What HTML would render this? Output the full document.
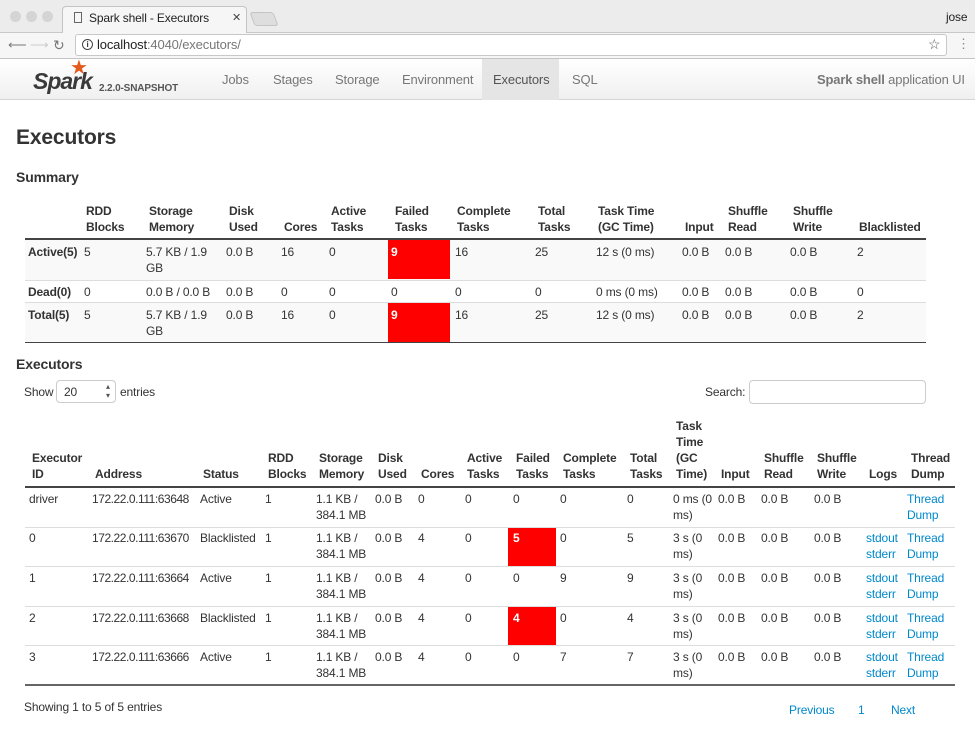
<!DOCTYPE html>
<html><head><meta charset="utf-8"><style>
*{margin:0;padding:0;box-sizing:border-box}
body{width:975px;height:729px;overflow:hidden;background:#fff;font-family:"Liberation Sans",Arial,sans-serif;font-size:12px;color:#333;position:relative;letter-spacing:-0.15px}
.a{position:absolute;line-height:16px;white-space:nowrap}
.b{font-weight:bold}
.l{color:#0088cc}
.red{position:absolute;background:#f00}
.w{color:#fff;font-weight:bold}
.hl{position:absolute;height:0}
.ad{letter-spacing:-0.45px}
</style></head><body>
<!-- browser chrome -->
<div style="position:absolute;left:0;top:0;width:975px;height:33px;background:#ececec;border-bottom:1px solid #c8c8c8"></div>
<div style="position:absolute;left:10px;top:11px;width:11px;height:11px;border-radius:50%;background:#d4d4d4"></div>
<div style="position:absolute;left:26px;top:11px;width:11px;height:11px;border-radius:50%;background:#d4d4d4"></div>
<div style="position:absolute;left:42px;top:11px;width:11px;height:11px;border-radius:50%;background:#d4d4d4"></div>
<div style="position:absolute;left:62px;top:6px;width:185px;height:28px;background:#f6f6f6;border:1px solid #c4c4c4;border-bottom:none;border-radius:4px 4px 0 0"></div>
<div style="position:absolute;left:252px;top:12px;width:24px;height:14px;background:#dedede;border:1px solid #c4c4c4;border-radius:3px;transform:skewX(20deg)"></div>
<div style="position:absolute;left:74px;top:12px;width:8px;height:11px;border:1px solid #666"></div>
<div class="a" style="left:89px;top:10px;font-size:12px;color:#222">Spark shell - Executors</div>
<div class="a" style="left:232px;top:10px;font-size:11px;color:#444">✕</div>
<div class="a" style="left:946px;top:9px;font-size:12px;color:#222">jose</div>
<div style="position:absolute;left:0;top:33px;width:975px;height:26px;background:#f6f6f6;border-bottom:1px solid #c4c4c4"></div>
<div class="a" style="left:8px;top:37px;font-size:13px;color:#777">⟵</div>
<div class="a" style="left:30px;top:37px;font-size:13px;color:#ccc">⟶</div>
<div class="a" style="left:53px;top:37px;font-size:14px;color:#777">↻</div>
<div style="position:absolute;left:75px;top:34px;width:872px;height:22px;background:#fff;border:1px solid #c8c8c8;border-radius:3px"></div>
<div style="position:absolute;left:82px;top:39px;width:11px;height:11px;border:1px solid #444;border-radius:50%;font-size:8px;line-height:9px;text-align:center;font-weight:bold">i</div>
<div class="a" style="left:97px;top:37px;font-size:13px;color:#222">localhost<span style="color:#777">:4040/executors/</span></div>
<div class="a" style="left:928px;top:36px;font-size:14px;color:#555">☆</div>
<div class="a" style="left:957px;top:36px;font-size:13px;color:#888">⋮</div>
<!-- navbar -->
<div style="position:absolute;left:0;top:59px;width:975px;height:41px;background:linear-gradient(#fff,#f0f0f0);border-bottom:1px solid #d4d4d4"></div>
<div class="a" style="left:33px;top:68px;font-size:23px;line-height:26px;font-style:italic;font-weight:bold;color:#3a3a3a;letter-spacing:-1px">Spark</div>
<div class="a" style="left:70px;top:58px;font-size:20px;line-height:20px;color:#e25a1c">★</div>
<div class="a" style="left:99px;top:81px;font-size:10px;font-weight:bold;color:#555">2.2.0-SNAPSHOT</div>
<div class="a" style="left:222px;top:72px;font-size:13px;color:#777">Jobs</div>
<div class="a" style="left:273px;top:72px;font-size:13px;color:#777">Stages</div>
<div class="a" style="left:335px;top:72px;font-size:13px;color:#777">Storage</div>
<div class="a" style="left:402px;top:72px;font-size:13px;color:#777">Environment</div>
<div style="position:absolute;left:482px;top:59px;width:77px;height:41px;background:#e5e5e5"></div>
<div class="a" style="left:493px;top:72px;font-size:13px;color:#555">Executors</div>
<div class="a" style="left:572px;top:72px;font-size:13px;color:#777">SQL</div>
<div class="a" style="left:817px;top:72px;font-size:13px;color:#777"><b>Spark shell</b> application UI</div>
<!-- headings -->
<div class="a b" style="left:16px;top:125px;font-size:21px;line-height:26px">Executors</div>
<div class="a b" style="left:16px;top:169px;font-size:14px">Summary</div>
<!-- summary table -->
<div style="position:absolute;left:25px;top:240px;width:901px;height:40px;background:#f9f9f9"></div>
<div style="position:absolute;left:25px;top:303px;width:901px;height:40px;background:#f9f9f9"></div>
<div class="hl" style="left:25px;top:238px;width:901px;border-top:2px solid #444"></div>
<div class="hl" style="left:25px;top:280px;width:901px;border-top:1px solid #ddd"></div>
<div class="hl" style="left:25px;top:302px;width:901px;border-top:1px solid #ddd"></div>
<div class="hl" style="left:25px;top:342px;width:901px;border-top:1px solid #444"></div>
<div class="red" style="left:388px;top:240px;width:62px;height:39px"></div>
<div class="red" style="left:388px;top:303px;width:62px;height:39px"></div>
<div class="a b" style="left:86px;top:203px">RDD<br>Blocks</div>
<div class="a b" style="left:149px;top:203px">Storage<br>Memory</div>
<div class="a b" style="left:229px;top:203px">Disk<br>Used</div>
<div class="a b" style="left:284px;top:219px">Cores</div>
<div class="a b" style="left:331px;top:203px">Active<br>Tasks</div>
<div class="a b" style="left:395px;top:203px">Failed<br>Tasks</div>
<div class="a b" style="left:457px;top:203px">Complete<br>Tasks</div>
<div class="a b" style="left:538px;top:203px">Total<br>Tasks</div>
<div class="a b" style="left:598px;top:203px">Task Time<br>(GC Time)</div>
<div class="a b" style="left:685px;top:219px">Input</div>
<div class="a b" style="left:728px;top:203px">Shuffle<br>Read</div>
<div class="a b" style="left:793px;top:203px">Shuffle<br>Write</div>
<div class="a b" style="left:859px;top:219px">Blacklisted</div>

<div class="a b" style="left:28px;top:244px">Active(5)</div><div class="a" style="left:84px;top:244px">5</div><div class="a" style="left:146px;top:244px">5.7 KB / 1.9<br>GB</div><div class="a" style="left:226px;top:244px">0.0 B</div><div class="a" style="left:281px;top:244px">16</div><div class="a" style="left:329px;top:244px">0</div><div class="a w" style="left:391px;top:244px">9</div><div class="a" style="left:455px;top:244px">16</div><div class="a" style="left:535px;top:244px">25</div><div class="a" style="left:596px;top:244px">12 s (0 ms)</div><div class="a" style="left:682px;top:244px">0.0 B</div><div class="a" style="left:725px;top:244px">0.0 B</div><div class="a" style="left:790px;top:244px">0.0 B</div><div class="a" style="left:857px;top:244px">2</div>

<div class="a b" style="left:28px;top:284px">Dead(0)</div><div class="a" style="left:84px;top:284px">0</div><div class="a" style="left:146px;top:284px">0.0 B / 0.0 B</div><div class="a" style="left:226px;top:284px">0.0 B</div><div class="a" style="left:281px;top:284px">0</div><div class="a" style="left:329px;top:284px">0</div><div class="a" style="left:391px;top:284px">0</div><div class="a" style="left:455px;top:284px">0</div><div class="a" style="left:535px;top:284px">0</div><div class="a" style="left:596px;top:284px">0 ms (0 ms)</div><div class="a" style="left:682px;top:284px">0.0 B</div><div class="a" style="left:725px;top:284px">0.0 B</div><div class="a" style="left:790px;top:284px">0.0 B</div><div class="a" style="left:857px;top:284px">0</div>

<div class="a b" style="left:28px;top:307px">Total(5)</div><div class="a" style="left:84px;top:307px">5</div><div class="a" style="left:146px;top:307px">5.7 KB / 1.9<br>GB</div><div class="a" style="left:226px;top:307px">0.0 B</div><div class="a" style="left:281px;top:307px">16</div><div class="a" style="left:329px;top:307px">0</div><div class="a w" style="left:391px;top:307px">9</div><div class="a" style="left:455px;top:307px">16</div><div class="a" style="left:535px;top:307px">25</div><div class="a" style="left:596px;top:307px">12 s (0 ms)</div><div class="a" style="left:682px;top:307px">0.0 B</div><div class="a" style="left:725px;top:307px">0.0 B</div><div class="a" style="left:790px;top:307px">0.0 B</div><div class="a" style="left:857px;top:307px">2</div>

<!-- executors -->
<div class="a b" style="left:16px;top:356px;font-size:14px">Executors</div>
<div class="a" style="left:24px;top:384px">Show</div>
<div style="position:absolute;left:56px;top:380px;width:60px;height:23px;border:1px solid #ccc;border-radius:4px;background:#fff"></div>
<div class="a" style="left:64px;top:384px">20</div>
<div class="a" style="left:106px;top:382px;font-size:8px;line-height:9px;color:#555">▴<br>▾</div>
<div class="a" style="left:120px;top:384px">entries</div>
<div class="a" style="left:705px;top:384px">Search:</div>
<div style="position:absolute;left:749px;top:380px;width:177px;height:24px;border:1px solid #ccc;border-radius:4px;background:#fff"></div>

<div class="hl" style="left:25px;top:486px;width:930px;border-top:2px solid #444"></div>
<div class="hl" style="left:25px;top:527px;width:930px;border-top:1px solid #ddd"></div>
<div class="hl" style="left:25px;top:566px;width:930px;border-top:1px solid #ddd"></div>
<div class="hl" style="left:25px;top:606px;width:930px;border-top:1px solid #ddd"></div>
<div class="hl" style="left:25px;top:645px;width:930px;border-top:1px solid #ddd"></div>
<div class="hl" style="left:25px;top:684px;width:930px;border-top:2px solid #666"></div>
<div class="red" style="left:508px;top:528px;width:48px;height:38px"></div>
<div class="red" style="left:508px;top:607px;width:48px;height:38px"></div>

<div class="a b" style="left:32px;top:450px">Executor<br>ID</div>
<div class="a b" style="left:95px;top:466px">Address</div>
<div class="a b" style="left:203px;top:466px">Status</div>
<div class="a b" style="left:268px;top:450px">RDD<br>Blocks</div>
<div class="a b" style="left:319px;top:450px">Storage<br>Memory</div>
<div class="a b" style="left:378px;top:450px">Disk<br>Used</div>
<div class="a b" style="left:421px;top:466px">Cores</div>
<div class="a b" style="left:467px;top:450px">Active<br>Tasks</div>
<div class="a b" style="left:516px;top:450px">Failed<br>Tasks</div>
<div class="a b" style="left:563px;top:450px">Complete<br>Tasks</div>
<div class="a b" style="left:630px;top:450px">Total<br>Tasks</div>
<div class="a b" style="left:676px;top:418px">Task<br>Time<br>(GC<br>Time)</div>
<div class="a b" style="left:721px;top:466px">Input</div>
<div class="a b" style="left:764px;top:450px">Shuffle<br>Read</div>
<div class="a b" style="left:817px;top:450px">Shuffle<br>Write</div>
<div class="a b" style="left:869px;top:466px">Logs</div>
<div class="a b" style="left:911px;top:450px">Thread<br>Dump</div>

<!-- rows -->
<div class="a" style="left:29px;top:491px">driver</div><div class="a ad" style="left:92px;top:491px">172.22.0.111:63648</div><div class="a" style="left:200px;top:491px">Active</div><div class="a" style="left:265px;top:491px">1</div><div class="a" style="left:316px;top:491px">1.1 KB /<br>384.1 MB</div><div class="a" style="left:375px;top:491px">0.0 B</div><div class="a" style="left:418px;top:491px">0</div><div class="a" style="left:465px;top:491px">0</div><div class="a" style="left:513px;top:491px">0</div><div class="a" style="left:560px;top:491px">0</div><div class="a" style="left:627px;top:491px">0</div><div class="a" style="left:673px;top:491px">0 ms (0<br>ms)</div><div class="a" style="left:718px;top:491px">0.0 B</div><div class="a" style="left:761px;top:491px">0.0 B</div><div class="a" style="left:814px;top:491px">0.0 B</div><div class="a l" style="left:907px;top:491px">Thread<br>Dump</div>

<div class="a" style="left:29px;top:530px">0</div><div class="a ad" style="left:92px;top:530px">172.22.0.111:63670</div><div class="a" style="left:200px;top:530px">Blacklisted</div><div class="a" style="left:265px;top:530px">1</div><div class="a" style="left:316px;top:530px">1.1 KB /<br>384.1 MB</div><div class="a" style="left:375px;top:530px">0.0 B</div><div class="a" style="left:418px;top:530px">4</div><div class="a" style="left:465px;top:530px">0</div><div class="a w" style="left:513px;top:530px">5</div><div class="a" style="left:560px;top:530px">0</div><div class="a" style="left:627px;top:530px">5</div><div class="a" style="left:673px;top:530px">3 s (0<br>ms)</div><div class="a" style="left:718px;top:530px">0.0 B</div><div class="a" style="left:761px;top:530px">0.0 B</div><div class="a" style="left:814px;top:530px">0.0 B</div><div class="a l" style="left:866px;top:530px">stdout<br>stderr</div><div class="a l" style="left:907px;top:530px">Thread<br>Dump</div>

<div class="a" style="left:29px;top:570px">1</div><div class="a ad" style="left:92px;top:570px">172.22.0.111:63664</div><div class="a" style="left:200px;top:570px">Active</div><div class="a" style="left:265px;top:570px">1</div><div class="a" style="left:316px;top:570px">1.1 KB /<br>384.1 MB</div><div class="a" style="left:375px;top:570px">0.0 B</div><div class="a" style="left:418px;top:570px">4</div><div class="a" style="left:465px;top:570px">0</div><div class="a" style="left:513px;top:570px">0</div><div class="a" style="left:560px;top:570px">9</div><div class="a" style="left:627px;top:570px">9</div><div class="a" style="left:673px;top:570px">3 s (0<br>ms)</div><div class="a" style="left:718px;top:570px">0.0 B</div><div class="a" style="left:761px;top:570px">0.0 B</div><div class="a" style="left:814px;top:570px">0.0 B</div><div class="a l" style="left:866px;top:570px">stdout<br>stderr</div><div class="a l" style="left:907px;top:570px">Thread<br>Dump</div>

<div class="a" style="left:29px;top:610px">2</div><div class="a ad" style="left:92px;top:610px">172.22.0.111:63668</div><div class="a" style="left:200px;top:610px">Blacklisted</div><div class="a" style="left:265px;top:610px">1</div><div class="a" style="left:316px;top:610px">1.1 KB /<br>384.1 MB</div><div class="a" style="left:375px;top:610px">0.0 B</div><div class="a" style="left:418px;top:610px">4</div><div class="a" style="left:465px;top:610px">0</div><div class="a w" style="left:513px;top:610px">4</div><div class="a" style="left:560px;top:610px">0</div><div class="a" style="left:627px;top:610px">4</div><div class="a" style="left:673px;top:610px">3 s (0<br>ms)</div><div class="a" style="left:718px;top:610px">0.0 B</div><div class="a" style="left:761px;top:610px">0.0 B</div><div class="a" style="left:814px;top:610px">0.0 B</div><div class="a l" style="left:866px;top:610px">stdout<br>stderr</div><div class="a l" style="left:907px;top:610px">Thread<br>Dump</div>

<div class="a" style="left:29px;top:649px">3</div><div class="a ad" style="left:92px;top:649px">172.22.0.111:63666</div><div class="a" style="left:200px;top:649px">Active</div><div class="a" style="left:265px;top:649px">1</div><div class="a" style="left:316px;top:649px">1.1 KB /<br>384.1 MB</div><div class="a" style="left:375px;top:649px">0.0 B</div><div class="a" style="left:418px;top:649px">4</div><div class="a" style="left:465px;top:649px">0</div><div class="a" style="left:513px;top:649px">0</div><div class="a" style="left:560px;top:649px">7</div><div class="a" style="left:627px;top:649px">7</div><div class="a" style="left:673px;top:649px">3 s (0<br>ms)</div><div class="a" style="left:718px;top:649px">0.0 B</div><div class="a" style="left:761px;top:649px">0.0 B</div><div class="a" style="left:814px;top:649px">0.0 B</div><div class="a l" style="left:866px;top:649px">stdout<br>stderr</div><div class="a l" style="left:907px;top:649px">Thread<br>Dump</div>

<div class="a" style="left:24px;top:699px">Showing 1 to 5 of 5 entries</div>
<div class="a l" style="left:789px;top:702px">Previous</div>
<div class="a l" style="left:858px;top:702px">1</div>
<div class="a l" style="left:891px;top:702px">Next</div>
</body></html>
